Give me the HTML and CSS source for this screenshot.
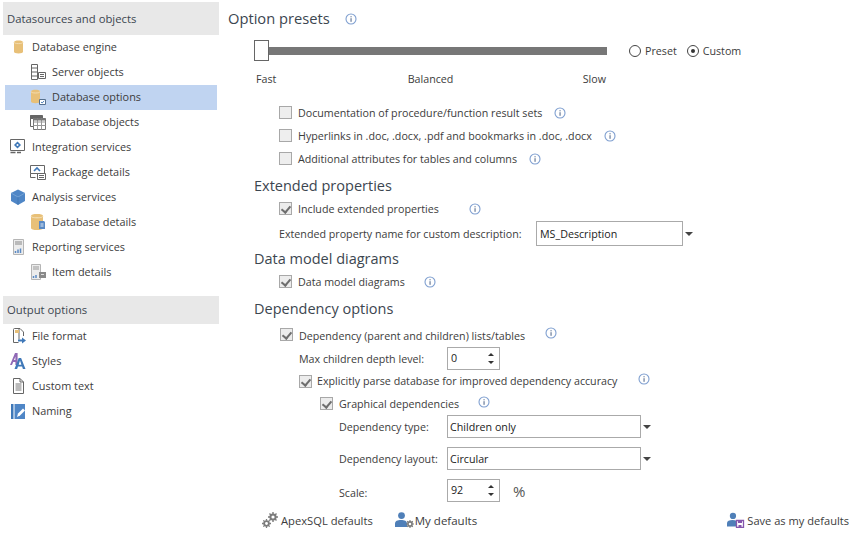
FILE: index.html
```html
<!DOCTYPE html>
<html lang="en">
<head>
<meta charset="utf-8">
<title>Options</title>
<link rel="stylesheet" href="styles.css">
</head>
<body>
<svg class="sprite" width="0" height="0" aria-hidden="true">
  <symbol id="info" viewBox="0 0 12 12">
    <circle cx="6" cy="6" r="5" fill="#fff" stroke="#7f9fd0" stroke-width="1.1"/>
    <rect x="5.5" y="5.2" width="1.1" height="3.6" fill="#5a6f90"/>
    <rect x="5.5" y="3.2" width="1.1" height="1.1" fill="#5a6f90"/>
  </symbol>
  <symbol id="db" viewBox="0 0 16 18" preserveAspectRatio="none">
    <path d="M2 3c0-1.400 2.500-2 6-2s6 .6 6 2v12c0 1.400-2.500 2-6 2s-6-.6-6-2z" fill="#e8c078"/>
    <path d="M2 3c0 1.200 2.500 1.800 6 1.800S14 4.200 14 3" fill="none" stroke="#f6e3bd" stroke-width="1"/>
  </symbol>
  <symbol id="gear" viewBox="0 0 10 10">
    <circle cx="5" cy="5" r="2.600" fill="none" stroke="#7b7b7b" stroke-width="2"/>
    <path d="M5 0v2M5 8v2M0 5h2M8 5h2M1.500 1.500l1.400 1.400M7.100 7.100l1.400 1.400M8.500 1.500 7.100 2.900M2.900 7.100 1.500 8.500" stroke="#7b7b7b" stroke-width="1.400"/>
  </symbol>
  <symbol id="user" viewBox="0 0 12 15">
    <circle cx="6.500" cy="3.600" r="3.400" fill="#4f7fb8"/>
    <path d="M0 15V11.500C0 9 2.500 8 6 8s6 1 6 3.500V15z" fill="#4f7fb8"/>
  </symbol>
</svg>

<div class="app">
  <aside class="sidebar">
    <h2 class="side-head side-head-first">Datasources and objects</h2>
    <ul class="tree">
      <li class="item">
        <svg class="ico" viewBox="0 0 16 16"><use href="#db" x="2.500" y="0.700" width="12" height="14.600"/></svg>
        <span>Database engine</span>
      </li>
      <li class="item sub">
        <svg class="ico" viewBox="0 0 16 16"><path d="M1.500 .5h6v15h-6zM1.500 4h6M1.500 8h6M1.500 12h6" fill="#fff" stroke="#666"/><path d="M8.500 8.500h7v6h-7z" fill="#fff" stroke="#666"/><path d="M10 10.500h4M10 12.500h4" stroke="#666"/></svg>
        <span>Server objects</span>
      </li>
      <li class="item sub active">
        <svg class="ico" viewBox="0 0 16 16"><use href="#db" x="-0.500" y="0" width="12" height="15"/><path d="M9.500 10.500h6v5h-6z" fill="#fff" stroke="#56708f"/><path d="M11 13l1.200 1 2-2.200" fill="none" stroke="#4f7fb8"/></svg>
        <span>Database options</span>
      </li>
      <li class="item sub">
        <svg class="ico" viewBox="0 0 16 16"><path d="M.5 1.500h12v3H.5z" fill="#666" stroke="#666"/><path d="M.5 1.500v11h3" fill="none" stroke="#666"/><path d="M3.500 4.500h12v11h-12z" fill="#fff" stroke="#777"/><path d="M3.500 8h12M3.500 11.500h12M7.500 4.500v11M11.500 4.500v11" stroke="#999"/><path d="M3.500 4.500h12v2h-12z" fill="#777"/></svg>
        <span>Database objects</span>
      </li>
      <li class="item">
        <svg class="ico" viewBox="0 0 16 16"><path d="M.5 .5h14v11H.5z" fill="#fff" stroke="#666"/><path d="M7.500 2.500l3.500 3.500-3.500 3.500L4 6z" fill="#3f78b8"/><circle cx="7.500" cy="6" r="1" fill="#fff"/><path d="M.5 13.500h5M7 13.500h4" stroke="#666" stroke-width="1.500"/></svg>
        <span>Integration services</span>
      </li>
      <li class="item sub">
        <svg class="ico" viewBox="0 0 16 16"><path d="M.5 1.500h14v8H.5z" fill="#fff" stroke="#666"/><path d="M4 7l3-3 3 3" fill="none" stroke="#3f78b8" stroke-width="1.600"/><path d="M.5 9.500v4h5" fill="none" stroke="#666"/><path d="M7.500 9.500h8v6h-8z" fill="#fff" stroke="#666"/><path d="M9 11.500h5M9 13.500h5" stroke="#666"/></svg>
        <span>Package details</span>
      </li>
      <li class="item">
        <svg class="ico" viewBox="0 0 16 16"><path d="M8 .5 15 4v8l-7 4-7-4V4z" fill="#4f86c6"/><path d="M1 4l7 4 7-4" fill="none" stroke="#7ea9d8" stroke-width=".8"/><path d="M8 8v8" stroke="#3a6fa8" stroke-width=".6"/></svg>
        <span>Analysis services</span>
      </li>
      <li class="item sub">
        <svg class="ico" viewBox="0 0 16 16"><use href="#db" x="-1" y="-1" width="16" height="18"/><path d="M9 7h5l1 1v7H9z" fill="#5b8ac4"/><path d="M10.500 10h3M10.500 12h3" stroke="#dfe9f5"/></svg>
        <span>Database details</span>
      </li>
      <li class="item">
        <svg class="ico" viewBox="0 0 16 16"><path d="M3.500 .5h10v15h-10z" fill="#ececec" stroke="#b5b5b5"/><path d="M5 3h7M5 5h7" stroke="#888"/><path d="M5.500 14v-2M8 14v-3.500M10.500 14v-4.500" stroke="#5b8ac4" stroke-width="1.500"/></svg>
        <span>Reporting services</span>
      </li>
      <li class="item sub">
        <svg class="ico" viewBox="0 0 16 16"><path d="M1.500 .5h9v15h-9z" fill="#ececec" stroke="#b5b5b5"/><path d="M3 3h6M3 5h6" stroke="#999"/><path d="M3.500 14v-2M6 14v-3" stroke="#5b8ac4" stroke-width="1.500"/><path d="M9 8h7v6H9z" fill="#8a8a8a"/><path d="M11 10.500h3" stroke="#ddd"/></svg>
        <span>Item details</span>
      </li>
    </ul>
    <h2 class="side-head side-head-out">Output options</h2>
    <ul class="tree">
      <li class="item">
        <svg class="ico" viewBox="0 0 16 16"><path d="M9 11.500v-11H4.500a1 1 0 0 0-1 1v13h5" fill="#fff" stroke="#666"/><path d="M9 .5h1l3.500 3.500v4" fill="none" stroke="#666"/><path d="M5 2h4v3H5z" fill="#e8c078"/><path d="M8 12.500h5" stroke="#3f78b8" stroke-width="2"/><path d="M12 9.500l4 3-4 3z" fill="#3f78b8"/></svg>
        <span>File format</span>
      </li>
      <li class="item">
        <svg class="ico" viewBox="0 0 16 16"><path d="M0 12 5 0h2.600v12H5.400V9H3.200L2 12zM4 7h1.400V3.500z" fill="#9069b5"/><path d="M4.500 16l4.200-11h2.400L15.500 16h-2.600l-.8-2.400H8L7.100 16zM8.700 11.700h2.700L10 7.500z" fill="#3f78b8"/></svg>
        <span>Styles</span>
      </li>
      <li class="item">
        <svg class="ico" viewBox="0 0 16 16"><path d="M3.500 .5h6.500l3.500 3.500v11.500h-10z" fill="#fff" stroke="#666"/><path d="M10 .5v3.500h3.500" fill="none" stroke="#666"/><path d="M5.500 6h6M5.500 8h6M5.500 10h6M5.500 12h6" stroke="#777"/></svg>
        <span>Custom text</span>
      </li>
      <li class="item">
        <svg class="ico" viewBox="0 0 16 16"><path d="M1 1h2.500v15H1z" fill="#3f78b8"/><path d="M4.500 1H15v15H4.500z" fill="#4f86c6"/><path d="M7 14l1-3.500 5-5 2 2-5 5z" fill="#fff"/></svg>
        <span>Naming</span>
      </li>
    </ul>
  </aside>

  <main class="content">
    <div class="title-row">
      <h1 class="title">Option presets</h1>
      <svg class="info down"><use href="#info"/></svg>
    </div>

    <div class="preset-row">
      <div class="slider"><div class="thumb"></div><div class="track"></div></div>
      <div class="radios">
        <span class="radio"></span><span>Preset</span>
        <span class="radio on"></span><span>Custom</span>
      </div>
    </div>
    <div class="scale-labels"><span>Fast</span><span class="mid">Balanced</span><span>Slow</span></div>

    <div class="row opt indent-1 disabled"><span class="check"></span><span>Documentation of procedure/function result sets</span><svg class="info"><use href="#info"/></svg></div>
    <div class="row opt indent-1 disabled"><span class="check"></span><span>Hyperlinks in .doc, .docx, .pdf and bookmarks in .doc, .docx</span><svg class="info"><use href="#info"/></svg></div>
    <div class="row opt indent-1 disabled"><span class="check"></span><span>Additional attributes for tables and columns</span><svg class="info"><use href="#info"/></svg></div>

    <h2 class="section">Extended properties</h2>
    <div class="row opt indent-1"><span class="check on"></span><span class="w-ext">Include extended properties</span><svg class="info"><use href="#info"/></svg></div>
    <div class="row field-ext">
      <span class="ext-label">Extended property name for custom description:</span>
      <div class="select select-ext">MS_Description</div><span class="caret"></span>
    </div>

    <h2 class="section">Data model diagrams</h2>
    <div class="row opt indent-1"><span class="check on"></span><span class="w-dm">Data model diagrams</span><svg class="info"><use href="#info"/></svg></div>

    <h2 class="section">Dependency options</h2>
    <div class="row opt dep-first"><span class="check on"></span><span class="w-dep">Dependency (parent and children) lists/tables</span><svg class="info up"><use href="#info"/></svg></div>
    <div class="row field indent-2">
      <span class="label label-max">Max children depth level:</span>
      <div class="spin"><span>0</span><span class="arrows"><i class="au"></i><i class="ad"></i></span></div>
    </div>
    <div class="row opt indent-2 row-parse"><span class="check on"></span><span class="w-parse">Explicitly parse database for improved dependency accuracy</span><svg class="info up"><use href="#info"/></svg></div>
    <div class="row opt indent-3"><span class="check on"></span><span class="w-graph">Graphical dependencies</span><svg class="info up"><use href="#info"/></svg></div>
    <div class="row field indent-4">
      <span class="label label-dep">Dependency type:</span>
      <div class="select select-dep">Children only</div><span class="caret"></span>
    </div>
    <div class="row field indent-4 gap-top">
      <span class="label label-dep">Dependency layout:</span>
      <div class="select select-dep">Circular</div><span class="caret"></span>
    </div>
    <div class="row field indent-4 gap-top">
      <span class="label label-dep label-scale">Scale:</span>
      <div class="spin"><span>92</span><span class="arrows"><i class="au"></i><i class="ad"></i></span></div>
      <span class="percent">%</span>
    </div>

    <div class="actions">
      <div class="btn btn-apex">
        <svg class="btn-ico" viewBox="0 0 16 16"><use href="#gear" x="6" y="0" width="10" height="10"/><use href="#gear" x="0" y="7" width="9" height="9"/></svg>
        <span>ApexSQL defaults</span>
      </div>
      <div class="btn btn-my">
        <svg class="btn-ico-wide" viewBox="0 0 19 16"><use href="#user" x="0" y="0" width="12" height="15"/><use href="#gear" x="11" y="8" width="8" height="8"/></svg>
        <span>My defaults</span>
      </div>
      <div class="btn btn-save">
        <svg class="btn-ico-save" viewBox="0 0 18 16"><use href="#user" x="0" y="0" width="11" height="15"/><path d="M9.500 8.500h7v7h-7z" fill="#fff" stroke="#8656ad" stroke-width="1.300"/><path d="M11 8.500h4v2.500h-4zM11.500 13h3v2.500h-3z" fill="#8656ad"/></svg>
        <span>Save as my defaults</span>
      </div>
    </div>
  </main>
</div>
</body>
</html>
```

FILE: styles.css
```css
* { box-sizing: border-box; }
html, body { margin: 0; padding: 0; background: #fff; }
body {
  width: 861px;
  height: 536px;
  overflow: hidden;
  font-family: "Open Sans", "Noto Sans", sans-serif;
  font-size: 10.7px;
  color: #3c3c3c;
}
.sprite { position: absolute; }
.app { display: flex; height: 536px; }

/* sidebar */
.sidebar { width: 219px; flex: none; padding: 2px 0 0 3px; }
.side-head {
  margin: 0;
  height: 33px;
  padding: 0 0 0 4px;
  display: flex;
  align-items: center;
  background: #e8e8e8;
  font-size: 11.3px;
  font-weight: 400;
  color: #3c4650;
}
.side-head-out { height: 28px; margin-top: 11px; padding-bottom: 2px; }
.tree { list-style: none; margin: 0; padding: 0 2px; }
.item {
  height: 25px;
  display: flex;
  align-items: center;
  padding: 0 0 2px 5px;
  gap: 6px;
  white-space: nowrap;
  font-size: 10.9px;
}
.item.sub { padding-left: 25px; }
.active { background: #c0d4f1; }
.ico { width: 16px; height: 16px; flex: none; overflow: hidden; }

/* main */
.content { flex: 1; min-width: 0; padding-top: 6px; }
.title-row { height: 24px; display: flex; align-items: center; padding-left: 9px; }
.title { margin: 0 15px 0 0; font-size: 14.7px; font-weight: 400; color: #3c4650; }
.info { width: 12px; height: 12px; flex: none; }
.info.up { position: relative; top: -2px; }
.info.down { position: relative; top: 1px; }

.preset-row { margin-top: 10px; height: 21px; display: flex; align-items: center; padding-left: 35px; }
.slider { width: 353px; height: 21px; display: flex; align-items: center; }
.thumb { width: 15px; height: 21px; border: 1px solid #666; background: #fff; flex: none; }
.track { flex: 1; height: 8px; background: #777; }
.radios { display: flex; align-items: center; margin-left: 22px; gap: 4px; }
.radio {
  width: 12px; height: 12px; flex: none;
  border: 1px solid #444; border-radius: 50%; background: #fff;
  display: flex; align-items: center; justify-content: center;
}
.radio.on::after { content: ""; width: 4px; height: 4px; border-radius: 50%; background: #333; }
.radios span:nth-child(2) { margin-right: 6px; }

.scale-labels {
  margin-top: 9px; height: 18px;
  display: flex; justify-content: space-between; align-items: center;
  width: 350px; margin-left: 37px;
}
.mid { margin-left: 2px; }

.row { display: flex; align-items: center; white-space: nowrap; }
.opt { height: 23px; gap: 6px; }
.scale-labels + .opt { margin-top: 13px; }
.opt .info { margin-left: 6px; }
.indent-1 { padding-left: 60px; }
.indent-2 { padding-left: 80px; }
.indent-3 { padding-left: 101px; }
.indent-4 { padding-left: 120px; }

.check {
  width: 13px; height: 13px; flex: none;
  border: 1px solid #a8a8a8; background: #ececec;
  position: relative;
}
.disabled .check { background: #eee; }
.check.on::after {
  content: ""; position: absolute; left: 3px; top: 1px;
  width: 4px; height: 7px;
  border: solid #6e6e6e; border-width: 0 2px 2px 0;
  transform: rotate(40deg);
}
.w-ext { width: 159px; }
.w-dm { width: 114px; }
.w-dep { width: 234px; padding-top: 2px; }
.w-parse { width: 310px; }
.w-graph { width: 127px; }

.section { margin: 3px 0 0 35px; height: 24px; display: flex; align-items: center; font-size: 14.5px; font-weight: 400; color: #3c4650; }
.section + .opt { margin-top: 0; }
.opt + .field-ext { margin-top: 1px; }
.field-ext { height: 25px; padding-left: 60px; }
.field-ext + .section { margin-top: 0; }
.ext-label { width: 257px; }
.section + .dep-first { margin-top: 3px; padding-left: 61px; }
.dep-first + .field { margin-top: 1px; }
.field { height: 23px; }
.label-max { width: 148px; }
.label-dep { width: 108px; }
.label-scale { padding-top: 4px; }
.gap-top { margin-top: 9px; }
.row-parse { height: 22px; gap: 5px; }

.select {
  height: 100%;
  border: 1px solid #aaa;
  display: flex; align-items: center;
  padding-left: 3px;
  color: #222;
  font-weight: 500;
}
.select-ext { width: 147px; }
.select-dep { width: 194px; height: 23px; padding-left: 2px; }
.caret {
  width: 0; height: 0; margin-left: 2px;
  border: 4px solid transparent; border-top: 4px solid #444; border-bottom: 0;
}
.spin {
  width: 53px; height: 23px;
  border: 1px solid #aaa;
  display: flex; align-items: center; justify-content: space-between;
  padding: 0 5px 2px 3px;
  color: #222;
  font-weight: 500;
}
.arrows { display: flex; flex-direction: column; gap: 5px; padding-top: 2px; }
.arrows i { width: 0; height: 0; border: 3px solid transparent; }
.au { border-bottom: 3px solid #333 !important; border-top: 0 !important; }
.ad { border-top: 3px solid #333 !important; border-bottom: 0 !important; }
.percent { margin-left: 13px; font-size: 15px; color: #555; }

.actions { display: flex; align-items: center; height: 22px; margin-top: 7px; padding-left: 43px; font-size: 11.2px; }
.btn { display: flex; align-items: center; gap: 3px; }
.btn-apex { margin-right: 22px; }
.btn-my { gap: 1px; font-size: 11.5px; }
.btn-save { margin-left: auto; margin-right: 12px; gap: 2px; font-size: 11.1px; }
.btn-ico { width: 16px; height: 16px; flex: none; }
.btn-ico-wide { width: 19px; height: 16px; flex: none; }
.btn-ico-save { width: 18px; height: 16px; flex: none; }
```
